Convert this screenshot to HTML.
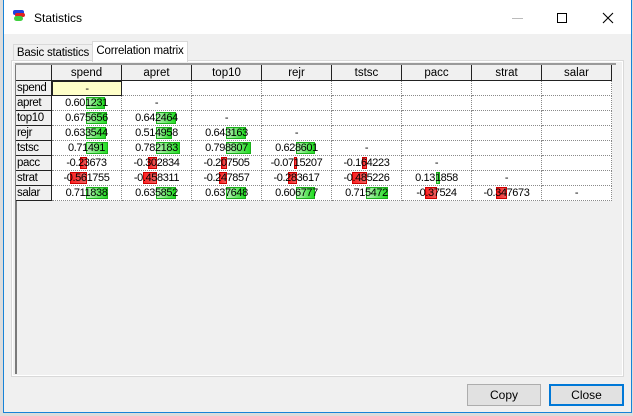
<!DOCTYPE html>
<html><head><style>
*{margin:0;padding:0;box-sizing:border-box}
body{width:633px;height:416px;background:#dcdcdc;font-family:"Liberation Sans",sans-serif;font-size:11.5px;position:relative;overflow:hidden;white-space:nowrap}
.win{position:absolute;left:3px;top:0;width:629px;height:413px;background:#f0f0f0;border:1px solid #1883d7;border-top:none}
.tb{position:absolute;left:0;top:0;width:627px;height:34px;background:#fff}
.a{position:absolute}
.tab{position:absolute;border:1px solid #d9d9d9;border-bottom:none;text-align:center;line-height:17px;letter-spacing:-0.2px}
.c{position:absolute;height:15px;border-right:1px dotted #8a8a8a;border-bottom:1px dotted #8a8a8a;background:#fff;text-align:center;line-height:14px;font-size:11px;letter-spacing:-0.4px}
.h{position:absolute;background:#f0f0f0;border-right:1px solid #222;border-bottom:1px solid #222;text-align:center;line-height:16px}
.rh{position:absolute;background:#f0f0f0;border-right:1px solid #222;border-bottom:1px solid #222;line-height:14px;padding-left:1px;height:15px;letter-spacing:-0.4px;overflow:hidden}
.bar{position:absolute;top:1px;height:12px}
.g{background:linear-gradient(90deg,#b8f0b8,#22dd22);border:1px solid #1ab01a}
.r{background:linear-gradient(90deg,#ff2020,#e86060);border:1px solid #d00000}
.t{position:relative}
.btn{position:absolute;height:22px;background:#e1e1e1;border:1px solid #adadad;text-align:center;line-height:20px;font-size:12px}
</style></head><body>
<div class="win">
<div class="tb">
 <div class="a" style="left:9px;top:10px;width:11px;height:5px;background:#1f3fe0;border-radius:2px"></div>
 <div class="a" style="left:11px;top:13px;width:10px;height:4px;background:#e02020;border-radius:2px"></div>
 <div class="a" style="left:10px;top:16px;width:9px;height:5px;background:#40d040;border-radius:3px"></div>
 <div class="a" style="left:30px;top:11px;font-size:12px">Statistics</div>
 <div class="a" style="left:508px;top:18px;width:11px;height:1px;background:#bbb"></div>
 <div class="a" style="left:553px;top:13px;width:10px;height:10px;border:1px solid #000"></div>
 <svg class="a" style="left:598px;top:12px" width="12" height="12"><path d="M1 1L11 11M11 1L1 11" stroke="#000" stroke-width="1.1"/></svg>
</div>
<div class="tab" style="left:9px;top:44px;width:80px;height:17px;background:#f0f0f0">Basic statistics</div>
<div class="a" style="left:7px;top:60px;width:613px;height:317px;border:1px solid #d9d9d9;background:#fff"></div>
<div class="a" style="left:9px;top:62px;width:609px;height:313px;background:#f0f0f0"></div>
<div class="tab" style="left:88px;top:41px;width:96px;height:21px;background:#fff;line-height:18px">Correlation matrix</div>
<div class="a" style="left:11px;top:63px;width:2px;height:311px;background:#7a7a7a"></div>
<div class="a" style="left:11px;top:63px;width:601px;height:2px;background:#9a9a9a"></div>
<div id="g" class="a" style="left:-3px;top:0"></div>
<div class="btn" style="left:463px;top:384px;width:74px">Copy</div>
<div class="btn" style="left:545px;top:384px;width:75px;border:2px solid #0078d7;line-height:18px">Close</div>
</div>
<script>
var names=["spend","apret","top10","rejr","tstsc","pacc","strat","salar"];
var d=[[],["0.601231"],["0.675656","0.642464"],["0.633544","0.514958","0.643163"],["0.71491","0.782183","0.798807","0.628601"],["-0.23673","-0.302834","-0.207505","-0.0715207","-0.164223"],["-0.561755","-0.458311","-0.247857","-0.283617","-0.485226","0.131858"],["0.711838","0.635852","0.637648","0.606777","0.715472","-0.37524","-0.347673"]];
var h="",X0=15,Y0=65,RW=36,CW=70,HH=16,RH=15;
h+='<div class="h" style="left:'+X0+'px;top:'+Y0+'px;width:'+RW+'px;height:'+HH+'px"></div>';
for(var j=0;j<8;j++)h+='<div class="h" style="left:'+(X0+RW+j*CW)+'px;top:'+Y0+'px;width:'+CW+'px;height:'+HH+'px">'+names[j]+'</div>';
for(var i=0;i<8;i++){var y=Y0+HH+i*RH;
h+='<div class="rh" style="left:'+X0+'px;top:'+y+'px;width:'+RW+'px">'+names[i]+'</div>';
for(var j=0;j<8;j++){var x=X0+RW+j*CW,inner="",st="";
 if(i==j){inner='<span class="t">-</span>';if(i==0)st="background:#ffffc8;border:1px solid #222;";}
 else if(j<i){var v=parseFloat(d[i][j]),w=Math.max(3,Math.round(Math.abs(v)*31));
  var l=v>0?34:35-w;
  inner='<div class="bar '+(v>0?'g':'r')+'" style="left:'+l+'px;width:'+w+'px"></div><span class="t">'+d[i][j]+'</span>';}
 h+='<div class="c" style="left:'+x+'px;top:'+y+'px;width:'+CW+'px;'+st+'">'+inner+'</div>';}}
document.getElementById("g").innerHTML=h;
</script>
</body></html>
